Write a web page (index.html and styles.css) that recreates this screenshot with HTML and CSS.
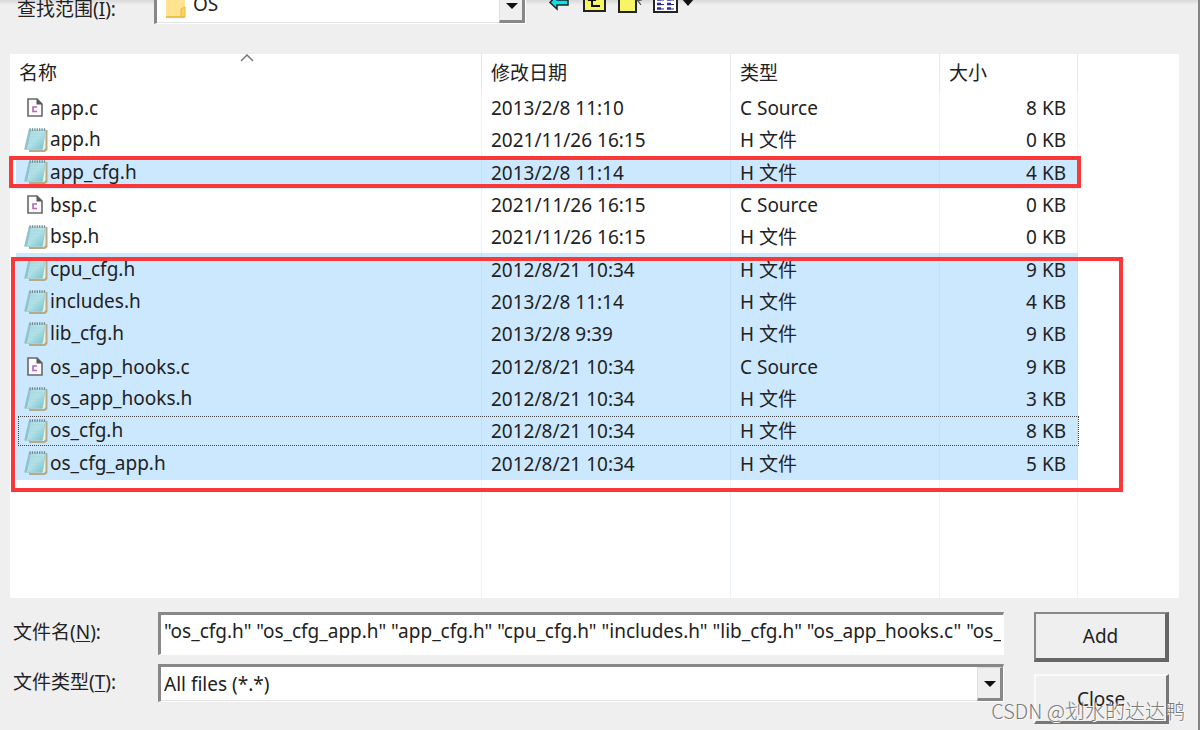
FILE: index.html
```html
<!DOCTYPE html>
<html lang="zh-CN">
<head>
<meta charset="utf-8">
<title>Add Files</title>
<link rel="stylesheet" href="styles.css">
</head>
<body>
<svg class="symbols" aria-hidden="true">
  <symbol id="c-file" viewBox="0 0 18 21">
    <path d="M2 2H11L16 7V19H2Z" fill="#fafafa" stroke="#68686c" stroke-width="1.600"/>
    <path d="M10.500 1.500L16.500 7.500H10.500Z" fill="#58585c"/>
    <path d="M11 10H7V14.500H11" fill="none" stroke="#b568b5" stroke-width="1.600"/>
  </symbol>
  <symbol id="h-file" viewBox="0 0 24 26">
    <path d="M6 3H23.500V23L21 25H5Z" fill="#b5ab88"/>
    <path d="M7 3H21.500V21L20 23H6Z" fill="#f2efdf"/>
    <path d="M5 3H21.500L18.500 22.500H.5Z" fill="url(#pad)" stroke="#8fc4cd" stroke-width=".5"/>
    <path d="M5 3L7 3L3 22H.5Z" fill="#8cc3cc"/>
    <path d="M6 7H20M5.500 10H19.500M5 13H19M4.500 16H18.500" stroke="#9fd3da" stroke-width=".5"/>
    <path d="M5.500 2.500H21.500" stroke="#6d858b" stroke-width="2.500" stroke-dasharray="1.200 1.200"/>
  </symbol>
  <linearGradient id="pad" x1="0" y1="0" x2="1" y2="1">
    <stop offset="0" stop-color="#a9d8df"/><stop offset=".5" stop-color="#b5e2e8"/><stop offset="1" stop-color="#6fbfcb"/>
  </linearGradient>
</svg>
<main class="dialog">
  <header class="toolbar">
    <label class="caption" for="folder">查找范围(<u>I</u>):</label>
    <div class="combo combo-folder">
      <select id="folder"><option>OS</option></select>
      <svg class="folder-icon" viewBox="0 0 22 26"><path d="M1 1H20V24H1Z" fill="#ffe391"/><path d="M16 24V16L20 14V24Z" fill="#ffd45c" stroke="#e8b93c"/><path d="M1 24H20" stroke="#edc04a" stroke-width="2"/></svg>
      <span class="arrow"></span>
    </div>
    <div class="tools">
      <button type="button" aria-label="Back"><svg viewBox="0 0 24 25"><path d="M2 14.500L9 7V12H20V17H9V21Z" fill="#00e5ee" stroke="#222" stroke-width="1.500"/></svg></button>
      <button type="button" aria-label="Up"><svg viewBox="0 0 24 25"><path d="M1 4H22V23H1Z" fill="#f8f565" stroke="#222" stroke-width="2"/><path d="M9 11V18H17" fill="none" stroke="#111" stroke-width="2"/><path d="M4.500 13L9 8L13.500 13Z" fill="#111"/></svg></button>
      <button type="button" aria-label="New folder"><svg viewBox="0 0 24 25"><path d="M1 11H18V24H1Z" fill="#f8f565" stroke="#222" stroke-width="2"/><path d="M18 11L20 13L23 17M19 13L24 12" fill="none" stroke="#555" stroke-width="1.200"/></svg></button>
      <button type="button" aria-label="View"><svg class="view" viewBox="0 0 42 25"><path d="M1 2H24V24H1Z" fill="#fff" stroke="#222" stroke-width="2"/><path d="M4 11.500H8M14 11.500H18M4 16H8M14 16H18M4 20.500H8M14 20.500H18" stroke="#2929a8" stroke-width="2.500"/><path d="M8 12H11M18 12H21M8 16.500H11M18 16.500H21M8 21H11M18 21H21" stroke="#333" stroke-width="1.200"/><path d="M29 11H41L35 18Z" fill="#111"/></svg></button>
    </div>
  </header>

  <section class="list">
    <table class="files">
      <colgroup><col class="c-name"><col class="c-date"><col class="c-type"><col class="c-size"><col></colgroup>
      <thead><tr><th>名称<svg class="sort" viewBox="0 0 14 8"><path d="M1 7L7 1L13 7" fill="none" stroke="#777" stroke-width="1.500"/></svg></th><th>修改日期</th><th>类型</th><th>大小</th><th></th></tr></thead>
      <tbody>
        <tr><td><svg class="ic"><use href="#c-file"/></svg>app.c</td><td>2013/2/8 11:10</td><td>C Source</td><td>8 KB</td><td></td></tr>
        <tr><td><svg class="ih"><use href="#h-file"/></svg>app.h</td><td>2021/11/26 16:15</td><td>H 文件</td><td>0 KB</td><td></td></tr>
        <tr class="on"><td><svg class="ih"><use href="#h-file"/></svg>app_cfg.h</td><td>2013/2/8 11:14</td><td>H 文件</td><td>4 KB</td><td></td></tr>
        <tr><td><svg class="ic"><use href="#c-file"/></svg>bsp.c</td><td>2021/11/26 16:15</td><td>C Source</td><td>0 KB</td><td></td></tr>
        <tr><td><svg class="ih"><use href="#h-file"/></svg>bsp.h</td><td>2021/11/26 16:15</td><td>H 文件</td><td>0 KB</td><td></td></tr>
        <tr class="on"><td><svg class="ih"><use href="#h-file"/></svg>cpu_cfg.h</td><td>2012/8/21 10:34</td><td>H 文件</td><td>9 KB</td><td></td></tr>
        <tr class="on"><td><svg class="ih"><use href="#h-file"/></svg>includes.h</td><td>2013/2/8 11:14</td><td>H 文件</td><td>4 KB</td><td></td></tr>
        <tr class="on"><td><svg class="ih"><use href="#h-file"/></svg>lib_cfg.h</td><td>2013/2/8 9:39</td><td>H 文件</td><td>9 KB</td><td></td></tr>
        <tr class="on"><td><svg class="ic"><use href="#c-file"/></svg>os_app_hooks.c</td><td>2012/8/21 10:34</td><td>C Source</td><td>9 KB</td><td></td></tr>
        <tr class="on"><td><svg class="ih"><use href="#h-file"/></svg>os_app_hooks.h</td><td>2012/8/21 10:34</td><td>H 文件</td><td>3 KB</td><td></td></tr>
        <tr class="on focus"><td><svg class="ih"><use href="#h-file"/></svg>os_cfg.h</td><td>2012/8/21 10:34</td><td>H 文件</td><td>8 KB</td><td></td></tr>
        <tr class="on"><td><svg class="ih"><use href="#h-file"/></svg>os_cfg_app.h</td><td>2012/8/21 10:34</td><td>H 文件</td><td>5 KB</td><td></td></tr>
      </tbody>
      <tfoot><tr><td></td><td></td><td></td><td></td><td></td></tr></tfoot>
    </table>
    <div class="mark mark-one"></div>
    <div class="mark mark-group"></div>
  </section>

  <form class="bottom">
    <div class="fields">
      <label class="caption" for="name">文件名(<u>N</u>):</label>
      <input id="name" type="text" value='"os_cfg.h" "os_cfg_app.h" "app_cfg.h" "cpu_cfg.h" "includes.h" "lib_cfg.h" "os_app_hooks.c" "os_app_hooks.h"'>
      <label class="caption" for="type">文件类型(<u>T</u>):</label>
      <div class="combo">
        <select id="type"><option>All files (*.*)</option></select>
        <span class="arrow"></span>
      </div>
    </div>
    <div class="actions">
      <button class="btn primary" type="button">Add</button>
      <button class="btn" type="button">Close</button>
    </div>
  </form>
  <div class="watermark">CSDN @划水的达达鸭</div>
</main>
</body>
</html>
```
FILE: styles.css
```css
* { box-sizing: border-box; }
body {
  margin: 0;
  background: #efefef;
  color: #222;
  font: 19px/24px "Noto Sans", "Noto Sans CJK SC", sans-serif;
  overflow: hidden;
}
.symbols { position: absolute; width: 0; height: 0; }
button, input, select { font: inherit; color: inherit; border-radius: 0; }
.dialog {
  position: relative;
  min-height: 100vh;
  padding: 0 19px 0 10px;
  border-right: 2px solid #858585;
  background: linear-gradient(#d9d9d9, #efefef 5px);
}
.caption { white-space: nowrap; }
u { text-underline-offset: 2px; }

.toolbar { display: flex; align-items: flex-end; height: 24px; padding-left: 7px; }
.toolbar .caption { width: 137px; height: 27px; }
.combo {
  position: relative;
  height: 38px;
  background: #fff;
  border: 1px solid #fff;
  border-top: 3px solid #888;
  border-left: 3px solid #888;
}
.combo select {
  display: block;
  width: 100%;
  height: 100%;
  padding: 0 30px 0 3px;
  border: 1px solid #e3e3e3;
  border-width: 0 1px 1px 0;
  outline: 0;
  background: none;
  appearance: none;
}
.combo-folder { flex: none; width: 372px; }
.combo-folder select { padding: 0 30px 3px 36px; }
.folder-icon { position: absolute; left: 8px; bottom: 4px; width: 22px; height: 26px; }
.arrow {
  position: absolute;
  top: 0;
  right: 0;
  bottom: 0;
  width: 26px;
  background: #efefef;
  border: 1px solid #ddd;
  border-right: 3px solid #888;
  border-bottom: 3px solid #888;
  pointer-events: none;
}
.arrow::after {
  content: "";
  position: absolute;
  left: 6px;
  top: 13px;
  border: 6px solid transparent;
  border-top-color: #111;
  border-bottom: 0;
}
.tools { display: flex; gap: 11px; margin-left: 22px; height: 36px; }
.tools button { padding: 0; border: 0; background: none; height: 25px; }
.tools svg { display: block; width: 24px; height: 25px; }
.tools .view { width: 42px; }

.list { position: relative; margin-top: 30px; background: #fff; }
.files { width: 100%; table-layout: fixed; border-spacing: 0; }
.c-name { width: 472px; }
.c-date { width: 249px; }
.c-type { width: 209px; }
.c-size { width: 138px; }
th { height: 38px; padding: 0 9px; font-weight: 400; text-align: left; border-right: 1px solid #e8e8e8; }
td { height: 32px; padding: 0 9px; border-right: 1px solid #ebf3fb; white-space: nowrap; }
tbody tr:nth-child(3n) td { height: 33px; }
td:nth-child(4) { text-align: right; padding-right: 11px; }
th:last-child, td:last-child { border-right: 0; }
td:first-child { padding-left: 8px; border-left: 6px solid transparent; background-clip: padding-box; }
.on td { background-color: #cce8ff; border-right-color: #c2e0f9; }
.on td:last-child { background: none; }
tfoot td { height: 118px; }
.sort { position: absolute; left: 230px; top: 0; width: 14px; height: 8px; }
td svg { vertical-align: middle; }
.ic { width: 18px; height: 21px; margin: -4px 6px 0 2px; }
.ih { width: 24px; height: 26px; margin: -3px 2px 0 0; }
.focus { position: relative; }
.focus::after {
  content: "";
  position: absolute;
  left: 8px;
  top: 1px;
  bottom: 1px;
  width: 1059px;
  border: 1px dotted #444;
}
.mark { position: absolute; border: 4px solid #fb3838; }
.mark-one { left: -1px; top: 102px; width: 1072px; height: 32px; }
.mark-group { left: 1px; top: 203px; width: 1112px; height: 235px; }

.bottom { display: flex; gap: 30px; padding: 14px 10px 0 3px; }
.fields { flex: 1; min-width: 0; display: grid; grid-template-columns: 145px 1fr; row-gap: 9px; align-items: center; align-content: start; }
.fields input {
  width: 100%;
  height: 43px;
  padding: 0 2px 8px 3px;
  background: #fff;
  border: 1px solid #fff;
  border-top: 3px solid #888;
  border-left: 3px solid #888;
  outline: 0;
}
.fields .caption { height: 27px; }
.actions { display: flex; flex-direction: column; gap: 12px; width: 135px; }
.btn {
  height: 50px;
  background: #efefef;
  border: 2px solid #fafafa;
  border-right: 3px solid #777;
  border-bottom: 3px solid #777;
}
.primary { border-color: #888 #666 #666 #888; border-right-width: 4px; border-bottom-width: 4px; }
.watermark {
  position: absolute;
  right: 13px;
  bottom: 5px;
  font: 20px/28px "Noto Sans CJK SC", sans-serif;
  font-weight: 300;
  color: #7c7c7c;
  text-shadow: 1px 1px #fafafa;
}
```
